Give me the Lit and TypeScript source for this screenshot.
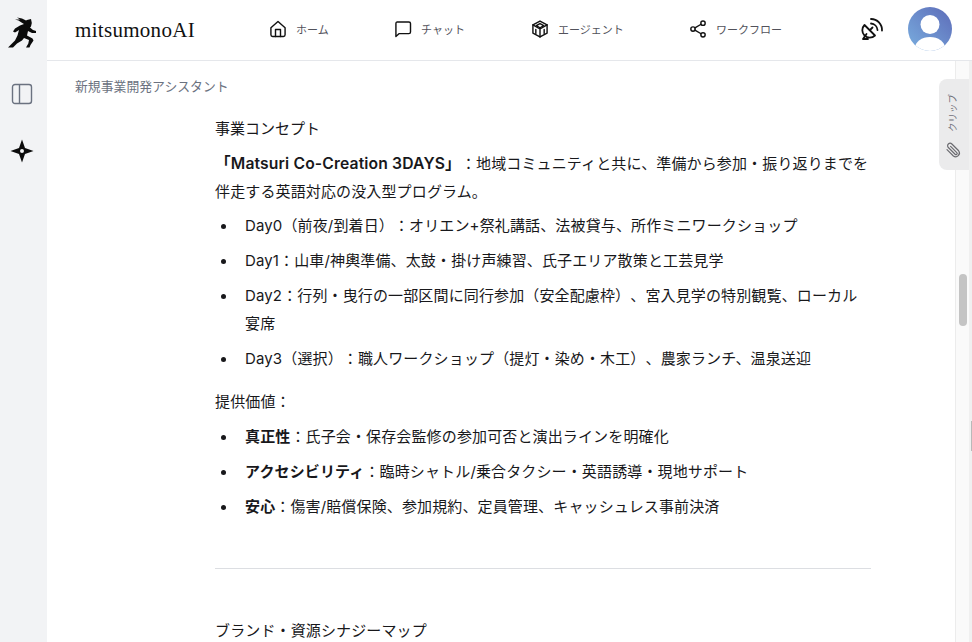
import { LitElement, html, css, svg } from "lit";
import { customElement } from "lit/decorators.js";

const nav: [string, unknown][] = [
  ["ホーム", svg`<path d="M3.500 10.500 12 3l8.500 7.500V19a2 2 0 0 1-2 2h-13a2 2 0 0 1-2-2z"/><path d="M9 21v-8.500h6V21"/>`],
  ["チャット", svg`<path d="M5 3.500h14a2 2 0 0 1 2 2v10a2 2 0 0 1-2 2H7.500L3.500 21V5.500a2 2 0 0 1 1.500-2z"/>`],
  ["エージェント", svg`<path d="M12 2.500 20.500 7v10L12 21.500 3.500 17V7z"/><path d="M12 5.500 16.500 8 12 10.500 7.500 8z"/><path d="M3.500 7 12 12l8.500-5M12 12v9.500M7 12.500v5M17 12.500v5"/>`],
  ["ワークフロー", svg`<circle cx="18" cy="5" r="2.600"/><circle cx="6" cy="12" r="2.600"/><circle cx="18" cy="19" r="2.600"/><path d="m8.300 10.700 7.400-4.400M8.300 13.300l7.400 4.400"/>`],
];

@customElement("app-root")
export class AppRoot extends LitElement {
  static styles = css`
    :host { display: block; width: 972px; height: 642px; overflow: hidden; position: relative; background: #fff;
      font-family: Inter, "Noto Sans CJK JP", sans-serif; color: #18181b; text-spacing-trim: space-all; }
    .shell { display: flex; height: 642px; }
    .side { width: 47px; flex: none; background: #f2f3f5; display: flex; flex-direction: column; align-items: center; }
    .ninja { width: 36px; height: 40px; margin: 14px 0 0 -3px; flex: none; }
    .panel { width: 22px; height: 22px; margin: 29px 0 0 -3px; color: #6b7280; flex: none; }
    .star { width: 24px; height: 24px; margin: 34px 0 0 -3px; flex: none; }
    .main { flex: 1; min-width: 0; display: flex; flex-direction: column; }
    header { height: 60px; flex: none; border-bottom: 1px solid #e5e7eb; display: flex; align-items: center; }
    .logo { font-family: "Liberation Serif", serif; font-size: 21px; letter-spacing: 0.3px; color: #111; margin-left: 28px; width: 193px; }
    nav { display: flex; }
    .item { display: flex; align-items: center; gap: 8px; font-size: 11px; color: #52525b; }
    .item span { margin-top: -3px; }
    .item:nth-child(1) { width: 125px; }
    .item:nth-child(2) { width: 137px; }
    .item:nth-child(3) { width: 158px; }
    .item:nth-child(4) { width: 168px; }
    .item svg { width: 20px; height: 20px; fill: none; stroke: #111; stroke-width: 1.7; stroke-linejoin: round; stroke-linecap: round; flex: none; margin-top: -2px; }
    .sat { width: 32px; height: 32px; fill: none; stroke: #111; stroke-width: 1.8; stroke-linecap: round; stroke-linejoin: round; flex: none; }
    .avatar { width: 44px; height: 44px; margin-left: 20px; margin-top: -3px; flex: none; }
    .body { flex: 1; min-height: 0; position: relative; display: flex; }
    .content { flex: 1; min-width: 0; overflow: hidden; }
    .crumb { font-size: 12.850px; color: #6b7280; margin: 17px 0 0 28px; line-height: 18px; }
    article { width: 656px; margin-left: 168px; font-size: 15px; letter-spacing: 0.135px; line-height: 28px; }
    p { margin: 0; }
    .h { margin-top: 19px; letter-spacing: 0; }
    .lead { margin-top: 7px; }
    ul { margin: 6px 0 0; padding: 0 0 0 30px; list-style: none; }
    li { position: relative; margin-bottom: 7px; }
    li::before { content: ""; position: absolute; left: -24px; top: 12px; width: 5px; height: 5px; border-radius: 50%; background: #18181b; }
    ul + p { margin-top: 15px; }
    ul + p + ul { margin-top: 7px; }
    b { font-weight: 600; }
    .l-title { font-weight: 600; font-size: 15.700px; }
    hr { border: 0; border-top: 1px solid #dcdee2; margin: 47px 0 48px; }
    .track { width: 17px; flex: none; background: #fafafa; border-left: 1px solid #ececec; border-right: 3px solid #f0f0f0; box-sizing: border-box; position: relative; }
    .thumb { position: absolute; left: 3px; top: 213px; width: 8px; height: 52px; border-radius: 4px; background: #c4c4c4; }
    .mark { position: absolute; right: -3px; top: 360px; width: 1px; height: 30px; background: #b9b9b9; }
    .clip { position: absolute; right: 3px; top: 18px; width: 30px; height: 91px; border-radius: 8px 0 0 8px; background: #ebebec; display: flex; flex-direction: column; align-items: center; justify-content: flex-end; padding: 0 3px 11px 0; box-sizing: border-box; gap: 9px; }
    .clip span { writing-mode: vertical-rl; text-orientation: sideways; transform: rotate(180deg); font-size: 9.500px; line-height: 10px; color: #71717a; }
    .clip svg { width: 18px; height: 18px; fill: none; stroke: #6b6b70; stroke-width: 1.6; stroke-linecap: round; flex: none; }
  `;

  render() {
    return html`<div class="shell">
      <aside class="side">
        <svg class="ninja" viewBox="4 14 36 40"><path fill="#0b0b0b" d="M27 20 31 19l.800 4-.800 3.500-1 1 3 2.500 3 1v2h-4l-4-2-1 4.500 5.500 3 1 2-3 4.500-1 2.500-3.500 0 2.300-4 .700-3.500-5-2-2 2.500-5 3-4 4H8l3-3 4-4 2.500-5 1.500-5.500-1.500 1-2.500 1.500-2-1 2-3 5-3 4-1.500-2.500-1.500-3-2-3.500-1h5l-3-2 5 1 4 2z"/></svg>
        <svg class="panel" viewBox="0 0 22 22" fill="none" stroke="currentColor" stroke-width="1.400"><rect x="1.500" y="1.500" width="19" height="19" rx="2.500"/><path d="M8.500 1.500v19"/></svg>
        <svg class="star" viewBox="0 0 24 24"><path fill-rule="evenodd" fill="#0b0b0b" d="M12 0.500l3 8.500 8.500 3-8.500 3-3 8.500-3-8.500-8.500-3 8.500-3zM12 10a2 2 0 1 0 0 4 2 2 0 0 0 0-4z"/></svg>
      </aside>
      <div class="main">
        <header>
          <div class="logo">mitsumonoAI</div>
          <nav>${nav.map(([t, p]) => html`<div class="item"><svg viewBox="0 0 24 24">${p}</svg><span>${t}</span></div>`)}</nav>
          <svg class="sat" viewBox="0 0 32 32"><path d="M8.500 11 19 21.500A7.400 7.400 0 0 1 8.500 11z"/><path d="M10.500 20 7 25M7 25h5M14 16l2.500-2.500M15 5a11 11 0 0 1 11 11.500M15 9.500a7 7 0 0 1 6.500 6.500"/></svg>
          <svg class="avatar" viewBox="0 0 44 44"><defs><linearGradient id="g" x1="0" y1="1" x2="1" y2="0"><stop offset="0" stop-color="#79aedf"/><stop offset="1" stop-color="#5d6bb8"/></linearGradient><clipPath id="c"><circle cx="22" cy="22" r="22"/></clipPath></defs><g clip-path="url(#c)"><rect width="44" height="44" fill="url(#g)"/><circle cx="22" cy="17.500" r="9.500" fill="#fff"/><ellipse cx="22" cy="41" rx="15" ry="11" fill="#fff"/></g></svg>
        </header>
        <div class="body">
          <div class="content">
            <div class="crumb">新規事業開発アシスタント</div>
            <article>
              <p class="h">事業コンセプト</p>
              <p class="lead"><b class="l-title">「Matsuri Co-Creation 3DAYS」</b>：地域コミュニティと共に、準備から参加・振り返りまでを伴走する英語対応の没入型プログラム。</p>
              <ul>
                <li>Day0（前夜/到着日）：オリエン+祭礼講話、法被貸与、所作ミニワークショップ</li>
                <li>Day1：山車/神輿準備、太鼓・掛け声練習、氏子エリア散策と工芸見学</li>
                <li>Day2：行列・曳行の一部区間に同行参加（安全配慮枠）、宮入見学の特別観覧、ローカル宴席</li>
                <li>Day3（選択）：職人ワークショップ（提灯・染め・木工）、農家ランチ、温泉送迎</li>
              </ul>
              <p>提供価値：</p>
              <ul>
                <li><b>真正性</b>：氏子会・保存会監修の参加可否と演出ラインを明確化</li>
                <li><b>アクセシビリティ</b>：臨時シャトル/乗合タクシー・英語誘導・現地サポート</li>
                <li><b>安心</b>：傷害/賠償保険、参加規約、定員管理、キャッシュレス事前決済</li>
              </ul>
              <hr />
              <p>ブランド・資源シナジーマップ</p>
            </article>
          </div>
          <div class="track"><div class="thumb"></div><div class="mark"></div></div>
          <div class="clip"><span>クリップ</span><svg viewBox="0 0 24 24"><path transform="matrix(-1 0 0 1 24 0)" d="M20 11.500 11.500 20a5 5 0 0 1-7-7l9-9a3.300 3.300 0 0 1 4.700 4.700l-9 9a1.600 1.600 0 0 1-2.300-2.300l8.300-8.300"/></svg></div>
        </div>
      </div>
    </div>`;
  }
}
